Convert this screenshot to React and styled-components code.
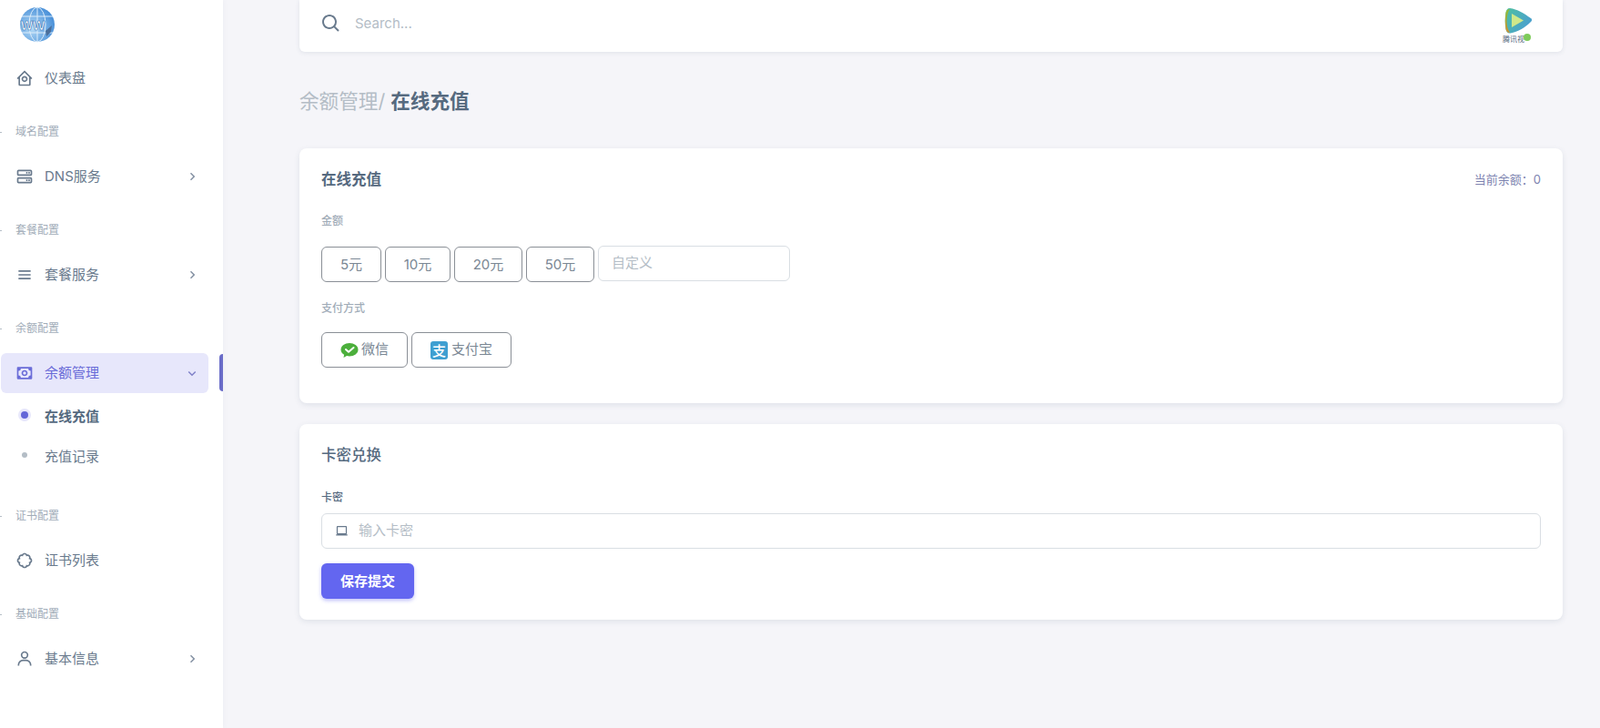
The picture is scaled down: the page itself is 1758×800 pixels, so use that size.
import React from 'react';
import styled, { createGlobalStyle } from 'styled-components';
import {
    BiHomeCircle,
    BiServer,
    BiMenu,
    BiMoney,
    BiBadge,
    BiUser,
    BiSearch,
    BiLaptop,
    BiChevronRight,
    BiChevronDown,
} from 'react-icons/bi';

const fontStack = `Inter, "Noto Sans CJK SC", sans-serif`;

const GlobalStyle = createGlobalStyle`
    * {
        box-sizing: border-box;
    }
    html, body {
        margin: 0;
        height: 100%;
        overflow: hidden;
        background: #f5f5f9;
        font-family: ${fontStack};
        color: #697a8d;
    }
`;

const Layout = styled.div`
    display: flex;
    height: 800px;
`;

const Sidebar = styled.aside`
    position: relative;
    width: 245px;
    flex-shrink: 0;
    background: #fff;
    box-shadow: 0 0 6px rgba(67, 89, 113, 0.06);
`;

const LogoArea = styled.div`
    height: 64px;
    padding: 7px 0 0 20px;
`;

const Nav = styled.nav`
    display: flex;
    flex-direction: column;
`;

const SectionLabel = styled.div`
    position: relative;
    height: 24px;
    margin: 25px 0 15px;
    padding-left: 17px;
    font-size: 12px;
    line-height: 24px;
    color: #a1acb8;

    &::before {
        content: '';
        position: absolute;
        left: 0;
        top: 12px;
        width: 2px;
        height: 1px;
        background: #b4bdc6;
    }
`;

const NavItem = styled.div`
    display: flex;
    align-items: center;
    height: 44px;
    margin: 0 16px 0 1px;
    padding: 0 9px 0 16px;
    border-radius: 6px;
    font-size: 15px;
    color: ${(p) => (p.$active ? '#6a6cd8' : '#697a8d')};
    background: ${(p) => (p.$active ? '#e7e7fb' : 'transparent')};

    svg.lead {
        font-size: 20px;
        margin-right: 12px;
        flex-shrink: 0;
    }
    span {
        flex: 1;
        padding-bottom: 4px;
    }
    svg.arrow {
        font-size: 18px;
        color: ${(p) => (p.$active ? '#7f81c8' : '#8592a3')};
    }
`;

const ActiveBar = styled.div`
    position: absolute;
    right: 0;
    top: 389px;
    width: 4px;
    height: 41px;
    background: #6a6cc8;
    border-radius: 4px 0 0 4px;
`;

const SubMenu = styled.div`
    display: flex;
    flex-direction: column;
    margin: 2px 0 8px;
`;

const SubItem = styled.div`
    display: flex;
    align-items: center;
    height: 44px;
    padding-left: 23px;
    font-size: 15px;
    font-weight: ${(p) => (p.$active ? 600 : 400)};
    color: ${(p) => (p.$active ? '#566a7f' : '#697a8d')};
`;

const Dot = styled.i`
    width: ${(p) => (p.$active ? '8px' : '6px')};
    height: ${(p) => (p.$active ? '8px' : '6px')};
    margin-left: ${(p) => (p.$active ? '0' : '1px')};
    margin-right: ${(p) => (p.$active ? '18px' : '19px')};
    border-radius: 50%;
    background: ${(p) => (p.$active ? '#6366d8' : '#b4bdc6')};
    box-shadow: ${(p) => (p.$active ? '0 0 0 3px #e7e7fb' : 'none')};
`;

const Main = styled.main`
    flex: 1;
    min-width: 0;
    padding: 0 41px 0 84px;
`;

const TopBar = styled.div`
    position: relative;
    display: flex;
    align-items: center;
    height: 57px;
    padding: 0 24px 6px 23px;
    background: #fff;
    border-radius: 0 0 6px 6px;
    box-shadow: 0 1px 5px rgba(67, 89, 113, 0.12);

    svg.search {
        font-size: 24px;
        color: #697a8d;
        margin-right: 12px;
    }
`;

const SearchInput = styled.input`
    flex: 1;
    border: 0;
    outline: 0;
    background: transparent;
    font-family: ${fontStack};
    font-size: 15px;
    color: #697a8d;

    &::placeholder {
        color: #b4bdc6;
    }
`;

const Avatar = styled.div`
    position: relative;
    flex-shrink: 0;
    width: 42px;
    height: 48px;
    padding-top: 5px;

    svg {
        display: block;
    }
`;

const AvatarName = styled.div`
    font-size: 8px;
    line-height: 9px;
    color: #566a7f;
    white-space: nowrap;
`;

const OnlineDot = styled.i`
    position: absolute;
    left: 23px;
    top: 35px;
    width: 8px;
    height: 8px;
    border-radius: 50%;
    background: #7ecb5a;
`;

const PageTitle = styled.h4`
    margin: 0;
    padding: 40px 0 38px;
    font-size: 21.6px;
    line-height: 28px;
    font-weight: 400;
    color: #b4bdc6;

    strong {
        font-weight: 700;
        color: #566a7f;
    }
`;

const Card = styled.section`
    position: relative;
    margin-bottom: 23px;
    padding: 22px 24px 0;
    height: ${(p) => p.$height};
    background: #fff;
    border-radius: 8px;
    box-shadow: 0 2px 6px rgba(67, 89, 113, 0.12);
`;

const CardHeader = styled.div`
    display: flex;
    justify-content: space-between;
    align-items: center;
    height: 22px;
`;

const CardTitle = styled.h5`
    margin: 0;
    font-size: 16.5px;
    font-weight: ${(p) => p.$weight || 600};
    color: #566a7f;
`;

const Balance = styled.div`
    font-size: 13px;
    color: #7d83b0;
`;

const FieldLabel = styled.div`
    margin: ${(p) => p.$margin};
    font-size: 12px;
    line-height: 16px;
    font-weight: 500;
    color: ${(p) => (p.$dark ? '#566a7f' : '#a1acb8')};
`;

const OptionRow = styled.div`
    display: flex;
    align-items: center;
    gap: 4px;
`;

const OptionButton = styled.button`
    display: flex;
    align-items: center;
    justify-content: center;
    height: 39px;
    width: ${(p) => p.$width};
    padding: 0 0 ${(p) => p.$lift || '2px'};
    border: 1px solid #8a8f96;
    border-radius: 6px;
    background: #fff;
    font-family: ${fontStack};
    font-size: 15px;
    color: #7a8794;
`;

const CustomAmount = styled.input`
    width: 211px;
    height: 39px;
    margin-top: -2px;
    padding: 0 14px 3px;
    border: 1px solid #d9dee3;
    border-radius: 6px;
    outline: 0;
    font-family: ${fontStack};
    font-size: 15px;

    &::placeholder {
        color: #b4bdc6;
    }
`;

const InputGroup = styled.div`
    display: flex;
    align-items: center;
    height: 39px;
    padding: 0 14px;
    border: 1px solid #d9dee3;
    border-radius: 6px;
    background: #fff;

    svg {
        font-size: 15px;
        color: #697a8d;
        margin-right: 11px;
    }
    input {
        flex: 1;
        padding: 0 0 2px;
        border: 0;
        outline: 0;
        font-family: ${fontStack};
        font-size: 15px;
    }
    input::placeholder {
        color: #b4bdc6;
    }
`;

const SubmitButton = styled.button`
    display: block;
    width: 102px;
    height: 39px;
    margin-top: 16px;
    padding: 0 0 2px;
    border: 0;
    border-radius: 6px;
    background: #6366f0;
    box-shadow: 0 2px 4px rgba(99, 102, 240, 0.4);
    font-family: ${fontStack};
    font-size: 15px;
    font-weight: 600;
    color: #fff;
`;

const AlipayIcon = styled.span`
    display: inline-flex;
    align-items: center;
    justify-content: center;
    width: 19px;
    height: 20px;
    margin: 4px 4px 0 0;
    border-radius: 3px;
    background: #3f9fd1;
    font-size: 15px;
    font-weight: 500;
    color: #fff;
`;

const WechatMark = styled.svg`
    margin: 4px 3px 0 0;
`;

const GlobeLogo = () => (
    <svg width="42" height="40" viewBox="0 0 42 40">
        <defs>
            <radialGradient id="globe" cx="0.35" cy="0.6" r="0.75">
                <stop offset="0" stopColor="#b5dbf7" />
                <stop offset="1" stopColor="#3b86d4" />
            </radialGradient>
        </defs>
        <circle cx="21" cy="20" r="19" fill="url(#globe)" />
        <g fill="none" stroke="#dcecfa" strokeWidth="1">
            <ellipse cx="21" cy="20" rx="9" ry="19" />
            <path d="M4 11h34M4 29h34M21 1v38" />
        </g>
        <path d="M30 27l7-6-1 7-5 5z" fill="#4a6f9c" />
        <text x="16" y="26" textAnchor="middle" fontSize="14" fontWeight="700" fill="#fff" stroke="#2d6fb5" strokeWidth="0.6" fontFamily="Liberation Sans, sans-serif">WW</text>
    </svg>
);

const VideoLogo = () => (
    <svg width="34" height="32" viewBox="0 0 34 32">
        <defs>
            <linearGradient id="playBack" x1="0" y1="0" x2="1" y2="0.6">
                <stop offset="0" stopColor="#4fc0a0" />
                <stop offset="1" stopColor="#4a9fd0" />
            </linearGradient>
            <linearGradient id="playLeft" x1="0" y1="0" x2="0" y2="1">
                <stop offset="0" stopColor="#8cbf3f" />
                <stop offset="1" stopColor="#d0902f" />
            </linearGradient>
        </defs>
        <path d="M8 2c-3 0-4 2-4.500 5-1 6-1 12 0 18 .5 3 2 5 5 4.500C17 28 25 23 31 17c1.500-1.500 1.500-3 0-4C24 8 16 3 8 2z" fill="url(#playBack)" />
        <path d="M8 3C4 8 3 22 8 29c-3 0-4-2-4.500-4-1-6-1-12 0-18C4 4 6 3 8 3z" fill="url(#playLeft)" />
        <path d="M10 8l13 7.500L10 23z" fill="#cfe88a" />
    </svg>
);

const WechatIcon = () => (
    <WechatMark width="20" height="19" viewBox="0 0 20 19">
        <path d="M10 2c5 0 9.500 3 9.500 7.200s-4.500 7.200-9.500 7.200c-1 0-2-.1-3-.4L3.500 18l.6-3.300C2 13.400.5 11.500.5 9.200.5 5 5 2 10 2z" fill="#4caf3c" />
        <path d="M6 9l3 2.800L14.500 7" fill="none" stroke="#fff" strokeWidth="2" strokeLinecap="round" strokeLinejoin="round" />
    </WechatMark>
);

export default function App() {
    return (
        <>
            <GlobalStyle />
            <Layout>
                <Sidebar>
                    <LogoArea>
                        <GlobeLogo />
                    </LogoArea>
                    <Nav>
                        <NavItem>
                            <BiHomeCircle className="lead" />
                            <span>仪表盘</span>
                        </NavItem>
                        <SectionLabel>域名配置</SectionLabel>
                        <NavItem>
                            <BiServer className="lead" />
                            <span>DNS服务</span>
                            <BiChevronRight className="arrow" />
                        </NavItem>
                        <SectionLabel>套餐配置</SectionLabel>
                        <NavItem>
                            <BiMenu className="lead" />
                            <span>套餐服务</span>
                            <BiChevronRight className="arrow" />
                        </NavItem>
                        <SectionLabel>余额配置</SectionLabel>
                        <NavItem $active>
                            <BiMoney className="lead" />
                            <span>余额管理</span>
                            <BiChevronDown className="arrow" />
                        </NavItem>
                        <SubMenu>
                            <SubItem $active>
                                <Dot $active />
                                在线充值
                            </SubItem>
                            <SubItem>
                                <Dot />
                                充值记录
                            </SubItem>
                        </SubMenu>
                        <SectionLabel>证书配置</SectionLabel>
                        <NavItem>
                            <BiBadge className="lead" />
                            <span>证书列表</span>
                        </NavItem>
                        <SectionLabel>基础配置</SectionLabel>
                        <NavItem>
                            <BiUser className="lead" />
                            <span>基本信息</span>
                            <BiChevronRight className="arrow" />
                        </NavItem>
                    </Nav>
                    <ActiveBar />
                </Sidebar>
                <Main>
                    <TopBar>
                        <BiSearch className="search" />
                        <SearchInput placeholder="Search..." />
                        <Avatar>
                            <VideoLogo />
                            <AvatarName>腾讯视</AvatarName>
                            <OnlineDot />
                        </Avatar>
                    </TopBar>
                    <PageTitle>
                        余额管理/ <strong>在线充值</strong>
                    </PageTitle>
                    <Card $height="280px">
                        <CardHeader>
                            <CardTitle>在线充值</CardTitle>
                            <Balance>当前余额：0</Balance>
                        </CardHeader>
                        <FieldLabel $margin="28px 0 20px">金额</FieldLabel>
                        <OptionRow>
                            <OptionButton $width="66px">5元</OptionButton>
                            <OptionButton $width="72px">10元</OptionButton>
                            <OptionButton $width="75px">20元</OptionButton>
                            <OptionButton $width="75px">50元</OptionButton>
                            <CustomAmount placeholder="自定义" />
                        </OptionRow>
                        <FieldLabel $margin="21px 0 18px">支付方式</FieldLabel>
                        <OptionRow>
                            <OptionButton $width="95px" $lift="4px">
                                <WechatIcon />
                                微信
                            </OptionButton>
                            <OptionButton $width="110px" $lift="4px">
                                <AlipayIcon>支</AlipayIcon>
                                支付宝
                            </OptionButton>
                        </OptionRow>
                    </Card>
                    <Card $height="215px">
                        <CardHeader>
                            <CardTitle $weight={500}>卡密兑换</CardTitle>
                        </CardHeader>
                        <FieldLabel $dark $margin="29px 0 9px">卡密</FieldLabel>
                        <InputGroup>
                            <BiLaptop />
                            <input placeholder="输入卡密" />
                        </InputGroup>
                        <SubmitButton>保存提交</SubmitButton>
                    </Card>
                </Main>
            </Layout>
        </>
    );
}
